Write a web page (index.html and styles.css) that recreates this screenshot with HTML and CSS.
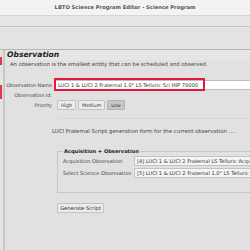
FILE: index.html
```html
<!DOCTYPE html>
<html lang="en">
<head>
  <meta charset="UTF-8" />
  <title>LBTO Science Program Editor - Science Program</title>
  <link rel="stylesheet" href="styles.css">
</head>
<body>
  <div class="titlebar">LBTO Science Program Editor - Science Program</div>
  <div class="toolbar"></div>
  <div class="toolbar2"></div>
  <div class="main">
    <div class="sidebar">
      <span class="mark"></span>
      <span class="mark second"></span>
    </div>
    <div class="content">
      <h1>Observation</h1>
      <p class="intro">An observation is the smallest entity that can be scheduled and observed.</p>
      <div class="form">
        <label>Observation Name</label>
        <div class="field">
          <input class="name-input" type="text" value="LUCI 1 &amp; LUCI 2 Fraternal 1.0&quot; LS Telluric Sci HIP 70000">
          <span class="highlight"></span>
        </div>
        <label>Observation Id:</label>
        <div class="field id-field"></div>
        <label>Priority</label>
        <div class="priority">
          <button class="btn">High</button>
          <button class="btn">Medium</button>
          <button class="btn selected">Low</button>
        </div>
      </div>
      <div class="script-panel">
        <p class="panel-text">LUCI Fraternal Script generation form for the current observation ....</p>
        <fieldset class="group">
          <legend>Acquisition + Observation</legend>
          <div class="group-row">
            <span class="group-label">Acquisition Observation</span>
            <div class="select">[4] LUCI 1 &amp; LUCI 2 Fraternal LS Telluric Acquisition</div>
          </div>
          <div class="group-row">
            <span class="group-label">Select Science Observation</span>
            <div class="select">[5] LUCI 1 &amp; LUCI 2 Fraternal 1.0" LS Telluric Sci HIP 70000</div>
          </div>
        </fieldset>
        <button class="btn generate">Generate Script</button>
      </div>
    </div>
  </div>
</body>
</html>
```

FILE: styles.css
```css
body {
  margin: 0;
  width: 250px;
  height: 250px;
  overflow: hidden;
  background: #e1e1e1;
  font-family: "DejaVu Sans", sans-serif;
  color: #3a3a3a;
}

.titlebar {
  height: 15px;
  line-height: 15px;
  background: #f3f3f3;
  text-align: center;
  font-size: 5.2px;
  font-weight: bold;
  color: #555;
}

.toolbar {
  height: 10px;
  background: #e6e6e6;
  border-top: 1px solid #d6d6d6;
  border-bottom: 1px solid #c4c4c4;
}

.toolbar2 {
  height: 22px;
  background: #e3e3e3;
  border-bottom: 1px solid #b4b4b4;
}

.main {
  display: flex;
  height: 200px;
}

.sidebar {
  width: 3px;
  border-right: 2px solid #c8c8c8;
  display: flex;
  flex-direction: column;
  gap: 20px;
  padding-top: 7px;
  background: #e4e4e4;
}

.mark {
  display: block;
  width: 2px;
  height: 8px;
  background: #e8334a;
}

.mark.second {
  height: 14px;
}

.content {
  flex: 1;
  min-width: 0;
}

h1 {
  margin: 0;
  padding: 0 0 0 2px;
  font-size: 7.6px;
  line-height: 10px;
  font-style: italic;
  font-weight: bold;
  color: #222;
  height: 10px;
  background: #e6e6e6;
}

.intro {
  margin: 0 0 0 5px;
  font-size: 5.3px;
  line-height: 8px;
  color: #444;
}

.form {
  display: grid;
  grid-template-columns: 47px 1fr;
  column-gap: 1px;
  margin-top: 11px;
  align-items: center;
  font-size: 4.9px;
}

.form label {
  text-align: right;
  white-space: nowrap;
  color: #444;
}

.field {
  position: relative;
  height: 11px;
}

.id-field {
  height: 9px;
}

.name-input {
  box-sizing: border-box;
  width: 100%;
  height: 10px;
  margin: 1px 0 0 2px;
  border: 1px solid #bdbdbd;
  background: #fff;
  font-family: "DejaVu Sans", sans-serif;
  font-size: 5.1px;
  color: #333;
  padding: 0 2px;
}

.highlight {
  position: absolute;
  left: 1px;
  top: -1px;
  width: 151px;
  height: 13px;
  box-sizing: border-box;
  border: 2px solid #e3183a;
}

.priority {
  display: flex;
  gap: 2px;
  padding: 1px 0 0 4px;
}

.btn {
  font-family: "DejaVu Sans", sans-serif;
  font-size: 4.8px;
  color: #333;
  background: #ececec;
  border: 1px solid #c2c2c2;
  border-radius: 1px;
  height: 10px;
  padding: 0 3px;
  margin: 0;
}

.btn.selected {
  background: #c6c6c6;
  border-color: #b2b2b2;
}

.script-panel {
  margin-top: 8px;
  padding-top: 9px;
  border-top: 1px solid #d6d6d6;
  margin-left: 53px;
}

.panel-text {
  margin: 0 0 0 -6px;
  font-size: 5.4px;
  color: #444;
}

.group {
  margin: 14px 0 0 -1px;
  padding: 2px 0 14px 5px;
  border: 1px solid #c6c6c6;
  border-right: none;
  font-size: 5px;
}

.group legend {
  font-weight: bold;
  font-size: 5.1px;
  color: #222;
  padding: 0 1px;
}

.group-row {
  display: flex;
  align-items: center;
  gap: 2px;
  margin-top: 2px;
}

.group-row:first-of-type {
  margin-top: 0;
}

.group-label {
  width: 69px;
  flex: none;
  white-space: nowrap;
  color: #444;
}

.select {
  flex: 1;
  min-width: 0;
  height: 8px;
  line-height: 8px;
  background: #f4f4f4;
  border: 1px solid #c2c2c2;
  padding-left: 2px;
  white-space: nowrap;
  overflow: hidden;
  font-size: 5.1px;
  color: #333;
}

.generate {
  margin-top: 10px;
  margin-left: -1px;
  padding: 0 2px;
  font-size: 5.2px;
}
```
